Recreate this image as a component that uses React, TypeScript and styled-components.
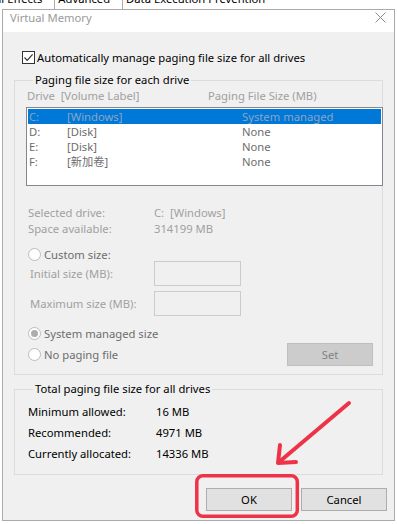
import React from "react"
import styled, { createGlobalStyle } from "styled-components"

const GlobalStyle = createGlobalStyle`
  html, body {
    margin: 0;
    padding: 0;
    background: #ffffff;
  }
  body {
    font-family: "Noto Sans", "Noto Sans CJK SC", "Liberation Sans", sans-serif;
    font-size: 11.25px;
    color: #000000;
  }
  * {
    box-sizing: border-box;
  }
`

const Page = styled.div`
  position: relative;
  width: 397px;
  height: 524px;
  overflow: hidden;
`

const BackStrip = styled.div`
  height: 9px;
  overflow: hidden;
  display: flex;
  gap: 3px;
  margin-left: -27px;
`

const BackTab = styled.span`
  display: block;
  line-height: 16px;
  margin-top: -9px;
  padding-right: 12px;
  border-right: 1px solid #adadad;
  white-space: nowrap;
  &:last-child {
    border-right: none;
  }
`

const Window = styled.div`
  margin: 0 2px;
  border: 1px solid #aaaaaa;
  background: #f0f0f0;
`

const TitleBar = styled.div`
  height: 22px;
  background: #ffffff;
  display: flex;
  align-items: flex-start;
  justify-content: space-between;
  padding: 1px 7px 0 7px;
`

const Title = styled.span`
  color: #999999;
  line-height: 14px;
`

const CloseIcon = styled.svg`
  margin-top: 1px;
  margin-right: 1px;
`

const Body = styled.div`
  padding: 17px 11px 9px 11px;
`

const CheckRow = styled.label`
  display: flex;
  align-items: center;
  gap: 2px;
  height: 16px;
  margin-left: 8px;
`

const CheckBox = styled.span`
  width: 13px;
  height: 13px;
  border: 1px solid #333333;
  background: #ffffff;
  display: flex;
  align-items: center;
  justify-content: center;
`

const Group = styled.fieldset<{ $top: number; $bottom: number }>`
  margin: ${({ $top }) => $top}px 0 0 0;
  border: 1px solid #dcdcdc;
  padding: 0 0 ${({ $bottom }) => $bottom}px 11px;
  min-width: 0;
`

const GroupLegend = styled.legend`
  margin-left: 7px;
  padding: 0 2px;
  line-height: 16px;
`

const HeaderRow = styled.div`
  display: grid;
  grid-template-columns: 181px 1fr;
  padding-left: 1px;
  line-height: 16px;
  color: #a0a0a0;
`

const DriveList = styled.div`
  margin-top: 3px;
  height: 79px;
  border: 1px solid #828790;
  background: #ffffff;
  padding: 1px;
  margin-right: -1px;
`

const DriveRow = styled.div<{ $selected?: boolean }>`
  display: grid;
  grid-template-columns: 38px 175px 1fr;
  height: 15px;
  line-height: 15px;
  padding-left: 1px;
  overflow: hidden;
  background: ${({ $selected }) => ($selected ? "#0078d7" : "transparent")};
  color: ${({ $selected }) => ($selected ? "#8da4c0" : "#6d6d6d")};
`

const InfoBlock = styled.div`
  margin-top: 19px;
`

const InfoRow = styled.div`
  display: grid;
  grid-template-columns: 126px 1fr;
  padding-left: 2px;
  line-height: 16px;
  color: #a0a0a0;
`

const RadioRow = styled.div<{ $top: number }>`
  display: flex;
  align-items: center;
  gap: 3px;
  height: 16px;
  margin-top: ${({ $top }) => $top}px;
  padding-left: 2px;
  color: #6d6d6d;
`

const Radio = styled.span<{ $checked?: boolean }>`
  width: 13px;
  height: 13px;
  border-radius: 50%;
  border: 1px solid #bcbcbc;
  background: #ffffff;
  display: flex;
  align-items: center;
  justify-content: center;
  &::after {
    content: "";
    display: ${({ $checked }) => ($checked ? "block" : "none")};
    width: 7px;
    height: 7px;
    border-radius: 50%;
    background: #adadad;
  }
`

const SizeRow = styled.div<{ $top: number }>`
  display: grid;
  grid-template-columns: 124px 87px;
  align-items: center;
  padding-left: 4px;
  margin-top: ${({ $top }) => $top}px;
  color: #a0a0a0;
`

const SizeInput = styled.div`
  height: 25px;
  border: 1px solid #cccccc;
  background: #f0f0f0;
`

const BottomRow = styled.div`
  display: flex;
  align-items: center;
  justify-content: space-between;
  height: 24px;
  margin-top: 1px;
  padding-right: 9px;
`

const Button = styled.div<{ $disabled?: boolean }>`
  width: 86px;
  height: 23px;
  display: flex;
  align-items: center;
  justify-content: center;
  border: 1px solid ${({ $disabled }) => ($disabled ? "#bfbfbf" : "#adadad")};
  background: ${({ $disabled }) => ($disabled ? "#cccccc" : "#e1e1e1")};
  color: ${({ $disabled }) => ($disabled ? "#838383" : "#000000")};
`

const TotalsGrid = styled.div`
  display: grid;
  grid-template-columns: 128px 1fr;
  grid-auto-rows: 21px;
  align-items: center;
  padding: 4px 0 1px 2px;
`

const ButtonRow = styled.div`
  display: flex;
  justify-content: flex-end;
  gap: 9px;
  margin: 13px -4px 0 0;
`

const Annotation = styled.svg`
  position: absolute;
  top: 0;
  left: 0;
  pointer-events: none;
`

const drives = [
  { letter: "C:", label: "[Windows]", size: "System managed" },
  { letter: "D:", label: "[Disk]", size: "None" },
  { letter: "E:", label: "[Disk]", size: "None" },
  { letter: "F:", label: "[新加卷]", size: "None" },
]

const totals = [
  ["Minimum allowed:", "16 MB"],
  ["Recommended:", "4971 MB"],
  ["Currently allocated:", "14336 MB"],
]

const App: React.FC = () => {
  return (
    <Page>
      <GlobalStyle />
      <BackStrip>
        <BackTab>Visual Effects</BackTab>
        <BackTab>Advanced</BackTab>
        <BackTab>Data Execution Prevention</BackTab>
      </BackStrip>
      <Window>
        <TitleBar>
          <Title>Virtual Memory</Title>
          <CloseIcon width="11" height="11" viewBox="0 0 11 11">
            <path d="M0.5 0.5 L10.5 10.5 M10.5 0.5 L0.5 10.5" stroke="#8c8c8c" strokeWidth="1" fill="none" />
          </CloseIcon>
        </TitleBar>
        <Body>
          <CheckRow>
            <CheckBox>
              <svg width="11" height="11" viewBox="0 0 11 11">
                <path d="M1.5 5.5 L4.2 8.3 L9.6 2.3" stroke="#333333" strokeWidth="1.2" fill="none" />
              </svg>
            </CheckBox>
            Automatically manage paging file size for all drives
          </CheckRow>

          <Group $top={7} $bottom={8}>
            <GroupLegend>Paging file size for each drive</GroupLegend>
            <HeaderRow>
              <span>Drive&nbsp; [Volume Label]</span>
              <span>Paging File Size (MB)</span>
            </HeaderRow>
            <DriveList>
              {drives.map((d, i) => (
                <DriveRow key={d.letter} $selected={i === 0}>
                  <span>{d.letter}</span>
                  <span>{d.label}</span>
                  <span>{d.size}</span>
                </DriveRow>
              ))}
            </DriveList>
            <InfoBlock>
              <InfoRow>
                <span>Selected drive:</span>
                <span>C:&nbsp; [Windows]</span>
              </InfoRow>
              <InfoRow>
                <span>Space available:</span>
                <span>314199 MB</span>
              </InfoRow>
            </InfoBlock>
            <RadioRow $top={9}>
              <Radio />
              Custom size:
            </RadioRow>
            <SizeRow $top={-1}>
              <span>Initial size (MB):</span>
              <SizeInput />
            </SizeRow>
            <SizeRow $top={5}>
              <span>Maximum size (MB):</span>
              <SizeInput />
            </SizeRow>
            <RadioRow $top={9}>
              <Radio $checked />
              System managed size
            </RadioRow>
            <BottomRow>
              <RadioRow $top={0}>
                <Radio />
                No paging file
              </RadioRow>
              <Button $disabled>Set</Button>
            </BottomRow>
          </Group>

          <Group $top={6} $bottom={9}>
            <GroupLegend>Total paging file size for all drives</GroupLegend>
            <TotalsGrid>
              {totals.map(([label, value]) => (
                <React.Fragment key={label}>
                  <span>{label}</span>
                  <span>{value}</span>
                </React.Fragment>
              ))}
            </TotalsGrid>
          </Group>

          <ButtonRow>
            <Button>OK</Button>
            <Button>Cancel</Button>
          </ButtonRow>
        </Body>
      </Window>
      <Annotation width="397" height="524" viewBox="0 0 397 524">
        <rect x="196.8" y="475.8" width="100.5" height="40.5" rx="6" fill="none" stroke="#ee3348" strokeWidth="3.5" />
        <path d="M349 403 L278.5 462.5" stroke="#ee3348" strokeWidth="4" strokeLinecap="round" fill="none" />
        <path d="M280 445 L278 463 L296 462" stroke="#ee3348" strokeWidth="4" strokeLinecap="round" strokeLinejoin="round" fill="none" />
      </Annotation>
    </Page>
  )
}

export default App
